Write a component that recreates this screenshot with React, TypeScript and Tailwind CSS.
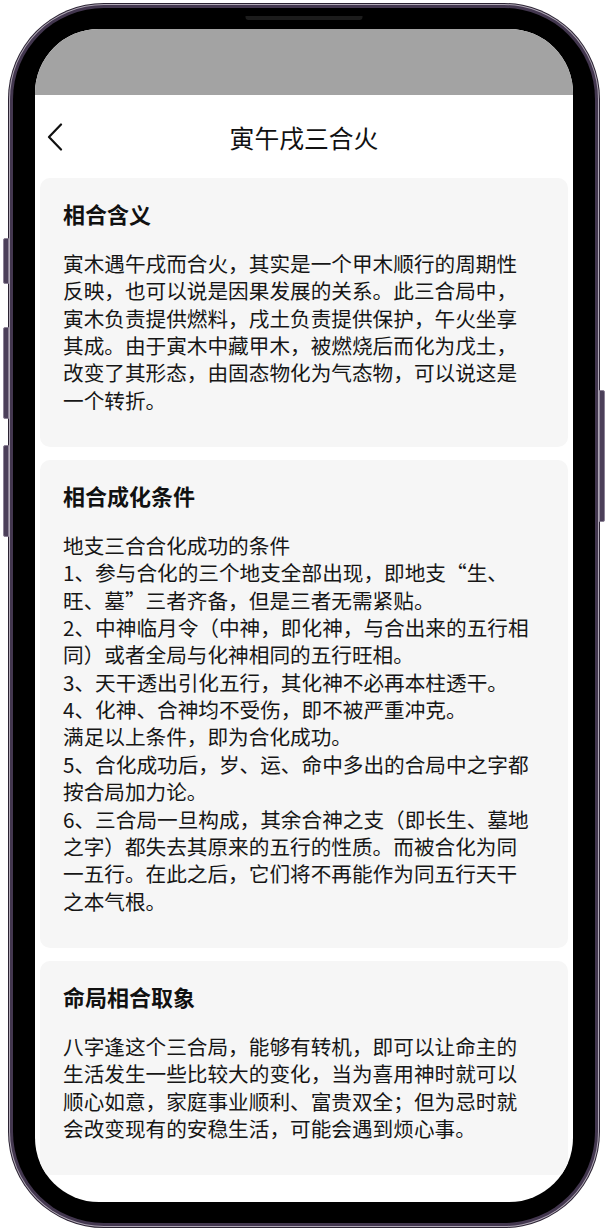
import React from "react";

type Section = { title: string; lines: string[] };

const sections: Section[] = [
  {
    title: "相合含义",
    lines: [
      "寅木遇午戌而合火，其实是一个甲木顺行的周期性",
      "反映，也可以说是因果发展的关系。此三合局中，",
      "寅木负责提供燃料，戌土负责提供保护，午火坐享",
      "其成。由于寅木中藏甲木，被燃烧后而化为戊土，",
      "改变了其形态，由固态物化为气态物，可以说这是",
      "一个转折。",
    ],
  },
  {
    title: "相合成化条件",
    lines: [
      "地支三合合化成功的条件",
      "1、参与合化的三个地支全部出现，即地支“生、",
      "旺、墓”三者齐备，但是三者无需紧贴。",
      "2、中神临月令（中神，即化神，与合出来的五行相",
      "同）或者全局与化神相同的五行旺相。",
      "3、天干透出引化五行，其化神不必再本柱透干。",
      "4、化神、合神均不受伤，即不被严重冲克。",
      "满足以上条件，即为合化成功。",
      "5、合化成功后，岁、运、命中多出的合局中之字都",
      "按合局加力论。",
      "6、三合局一旦构成，其余合神之支（即长生、墓地",
      "之字）都失去其原来的五行的性质。而被合化为同",
      "一五行。在此之后，它们将不再能作为同五行天干",
      "之本气根。",
    ],
  },
  {
    title: "命局相合取象",
    lines: [
      "八字逢这个三合局，能够有转机，即可以让命主的",
      "生活发生一些比较大的变化，当为喜用神时就可以",
      "顺心如意，家庭事业顺利、富贵双全；但为忌时就",
      "会改变现有的安稳生活，可能会遇到烦心事。",
    ],
  },
];

const FONT = '"Noto Sans CJK SC", "Noto Sans", sans-serif';

function Card({ s }: { s: Section }) {
  return (
    <section className="mx-[5px] rounded-[10px] bg-[#f6f6f6] pl-[23px] pr-[10px] pt-[20px] pb-[33px] flex flex-col gap-[22px]">
      <h2 className="text-[22px] leading-[30px] font-bold text-[#111]">{s.title}</h2>
      <div className="text-[20.65px] leading-[27.35px] text-[#161616]">
        {s.lines.map((l, i) => (
          <p key={i} className="whitespace-nowrap">
            {l}
          </p>
        ))}
      </div>
    </section>
  );
}

function BackIcon() {
  return (
    <svg width="16" height="28" viewBox="0 0 16 28" fill="none">
      <polyline
        points="14,1.5 2,14 14,26.5"
        stroke="#111"
        strokeWidth="2.2"
        strokeLinecap="round"
        strokeLinejoin="round"
      />
    </svg>
  );
}

export default function App() {
  return (
    <div className="w-[608px] h-[1232px] bg-white pl-[8px] pt-[3px]" style={{ fontFamily: FONT }}>
      {/* phone body */}
      <div className="relative w-[592px] h-[1225px] rounded-[96px] bg-[#2a2232] p-[1px]">
        {/* hardware keys along the frame edges */}
        <div className="absolute -left-[5px] top-[235px] w-[6px] h-[46px] rounded-l-[2px] bg-[#4b3f59] border border-[#8c8296]" />
        <div className="absolute -left-[5px] top-[324px] w-[6px] h-[92px] rounded-l-[2px] bg-[#4b3f59] border border-[#8c8296]" />
        <div className="absolute -left-[5px] top-[442px] w-[6px] h-[92px] rounded-l-[2px] bg-[#4b3f59] border border-[#8c8296]" />
        <div className="absolute -right-[5px] top-[387px] w-[6px] h-[132px] rounded-r-[2px] bg-[#4b3f59] border border-[#8c8296]" />

        <div className="w-full h-full rounded-[95px] bg-[#b0a8b6] p-[1px]">
          <div className="w-full h-full rounded-[94px] bg-[#43374f] p-[3px]">
            <div className="relative w-full h-full rounded-[91px] bg-black px-[22px] py-[21px]">
              {/* speaker slot */}
              <div className="absolute left-1/2 -translate-x-1/2 top-[8px] w-[117px] h-[4px] rounded-b-[3px] bg-[#1c1c1c]" />
              {/* screen */}
              <div className="w-full h-full rounded-[64px] overflow-hidden bg-white flex flex-col">
                <div className="h-[66px] shrink-0 bg-[#a3a3a3]" />
                <header className="h-[83px] shrink-0 grid grid-cols-[1fr_auto_1fr] items-center px-[12px]">
                  <div className="flex items-center">
                    <BackIcon />
                  </div>
                  <h1 className="text-[24.8px] leading-[32px] text-[#111]">寅午戌三合火</h1>
                  <div />
                </header>
                <main className="flex flex-col gap-[13px]">
                  {sections.map((s, i) => (
                    <Card key={i} s={s} />
                  ))}
                </main>
              </div>
            </div>
          </div>
        </div>
      </div>
    </div>
  );
}
